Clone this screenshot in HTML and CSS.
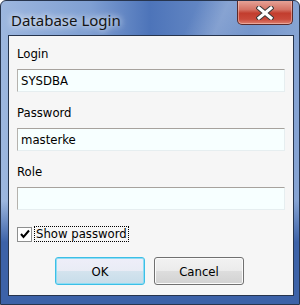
FILE: index.html
```html
<!DOCTYPE html>
<html>
<head>
<meta charset="utf-8">
<link rel="stylesheet" href="styles.css">
</head>
<body>
<div class="window">
  <div class="titlebar">
    <span class="title">Database Login</span>
    <div class="close">
      <svg width="18" height="14" viewBox="0 0 18 14">
        <path d="M3 2 L15 12 M15 2 L3 12" stroke="#3a3a3a" stroke-width="5" stroke-linecap="square"/>
        <path d="M3 2 L15 12 M15 2 L3 12" stroke="#ffffff" stroke-width="3" stroke-linecap="square"/>
      </svg>
    </div>
  </div>
  <div class="client">
    <div class="field">
      <label class="label">Login</label>
      <div class="input">SYSDBA</div>
    </div>
    <div class="field">
      <label class="label">Password</label>
      <div class="input">masterke</div>
    </div>
    <div class="field">
      <label class="label">Role</label>
      <div class="input"></div>
    </div>
    <div class="check-row">
      <span class="checkbox">
        <svg width="12" height="12" viewBox="0 0 12 12">
          <path d="M2 6 L4.5 9 L10 2.5" stroke="#000" stroke-width="2" fill="none"/>
        </svg>
      </span>
      <span class="check-label">Show password</span>
    </div>
    <div class="buttons">
      <div class="btn btn-default">OK</div>
      <div class="btn">Cancel</div>
    </div>
  </div>
</div>
</body>
</html>
```
FILE: styles.css
```css
html, body {
  margin: 0;
  padding: 0;
  background: #ffffff;
}
.window {
  width: 300px;
  height: 305px;
  box-sizing: border-box;
  display: flex;
  flex-direction: column;
  border: 1px solid #27354e;
  border-radius: 6px 6px 0 0;
  background:
    linear-gradient(115deg, rgba(255,255,255,0) 45%, rgba(255,255,255,0.18) 52%, rgba(255,255,255,0) 60%),
    linear-gradient(90deg, #9db7df 0%, #7f9fd2 30%, #4d74b9 50%, #6d8fc8 75%, #86a4d3 100%);
  overflow: hidden;
  position: relative;
}
.window::after {
  content: "";
  position: absolute;
  left: 0;
  right: 0;
  top: 200px;
  bottom: 0;
  background: linear-gradient(180deg, rgba(60,98,168,0) 0%, #3c62a8 40%);
  z-index: 0;
}
.titlebar {
  height: 34px;
  display: flex;
  align-items: flex-start;
  position: relative;
  z-index: 1;
}
.title {
  margin: 9px 0 0 10px;
  font-family: "Noto Sans", "Open Sans", sans-serif;
  font-size: 15px;
  line-height: 20px;
  color: #141414;
  text-shadow: 0 0 6px rgba(255,255,255,0.9), 0 0 10px rgba(255,255,255,0.7);
}
.close {
  margin-left: auto;
  margin-right: 6px;
  margin-top: -1px;
  width: 56px;
  height: 25px;
  box-sizing: border-box;
  border: 1px solid #5b2a2a;
  border-top: none;
  border-radius: 0 0 5px 5px;
  background: linear-gradient(180deg, #e7a79c 0%, #d47264 40%, #c23d2e 55%, #c9493a 80%, #dd8071 100%);
  box-shadow: inset 0 0 0 1px rgba(255,220,210,0.45);
  display: flex;
  align-items: center;
  justify-content: center;
}
.close svg {
  display: block;
  margin-top: 1px;
}
.client {
  flex: 1;
  margin: 0 5px 8px 7px;
  border: 1px solid #26344c;
  background: #f6f6f6;
  display: flex;
  flex-direction: column;
  padding: 10px 8px 0 8px;
  position: relative;
  z-index: 1;
  font-family: "DejaVu Sans Condensed", "DejaVu Sans", sans-serif;
  font-size: 13px;
  color: #000;
}
.field {
  display: flex;
  flex-direction: column;
  margin-bottom: 13px;
}
.label {
  line-height: 16px;
  height: 16px;
  margin-bottom: 7px;
}
.input {
  height: 23px;
  box-sizing: border-box;
  border: 1px solid #e6eef0;
  border-top-color: #a7a29d;
  border-left-color: #b5b2ad;
  background: #f7ffff;
  padding: 0 3px;
  line-height: 21px;
}
.check-row {
  display: flex;
  align-items: center;
  height: 16px;
  margin-top: 3px;
}
.checkbox {
  width: 13px;
  height: 13px;
  border: 1px solid #8e8f8f;
  background: #ffffff;
  display: flex;
  align-items: center;
  justify-content: center;
}
.check-label {
  margin-left: 2px;
  border: 1px dotted #000;
  padding: 0 1px;
  line-height: 14px;
}
.buttons {
  display: flex;
  justify-content: center;
  gap: 9px;
  margin-top: 15px;
  padding-right: 3px;
}
.btn {
  width: 90px;
  height: 28px;
  box-sizing: border-box;
  border: 1px solid #707070;
  border-radius: 3px;
  background: linear-gradient(180deg, #f2f2f2 0%, #ebebeb 48%, #dddddd 52%, #d2d2d2 100%);
  box-shadow: inset 0 0 0 1px #fbfbfb;
  display: flex;
  align-items: center;
  justify-content: center;
}
.btn-default {
  border-color: #3cbfe6;
  background: linear-gradient(180deg, #eeeef9 0%, #e9ecf5 48%, #d3e3ee 52%, #c7dde9 100%);
  box-shadow: inset 0 0 0 1px #8fdcf4;
}
```
